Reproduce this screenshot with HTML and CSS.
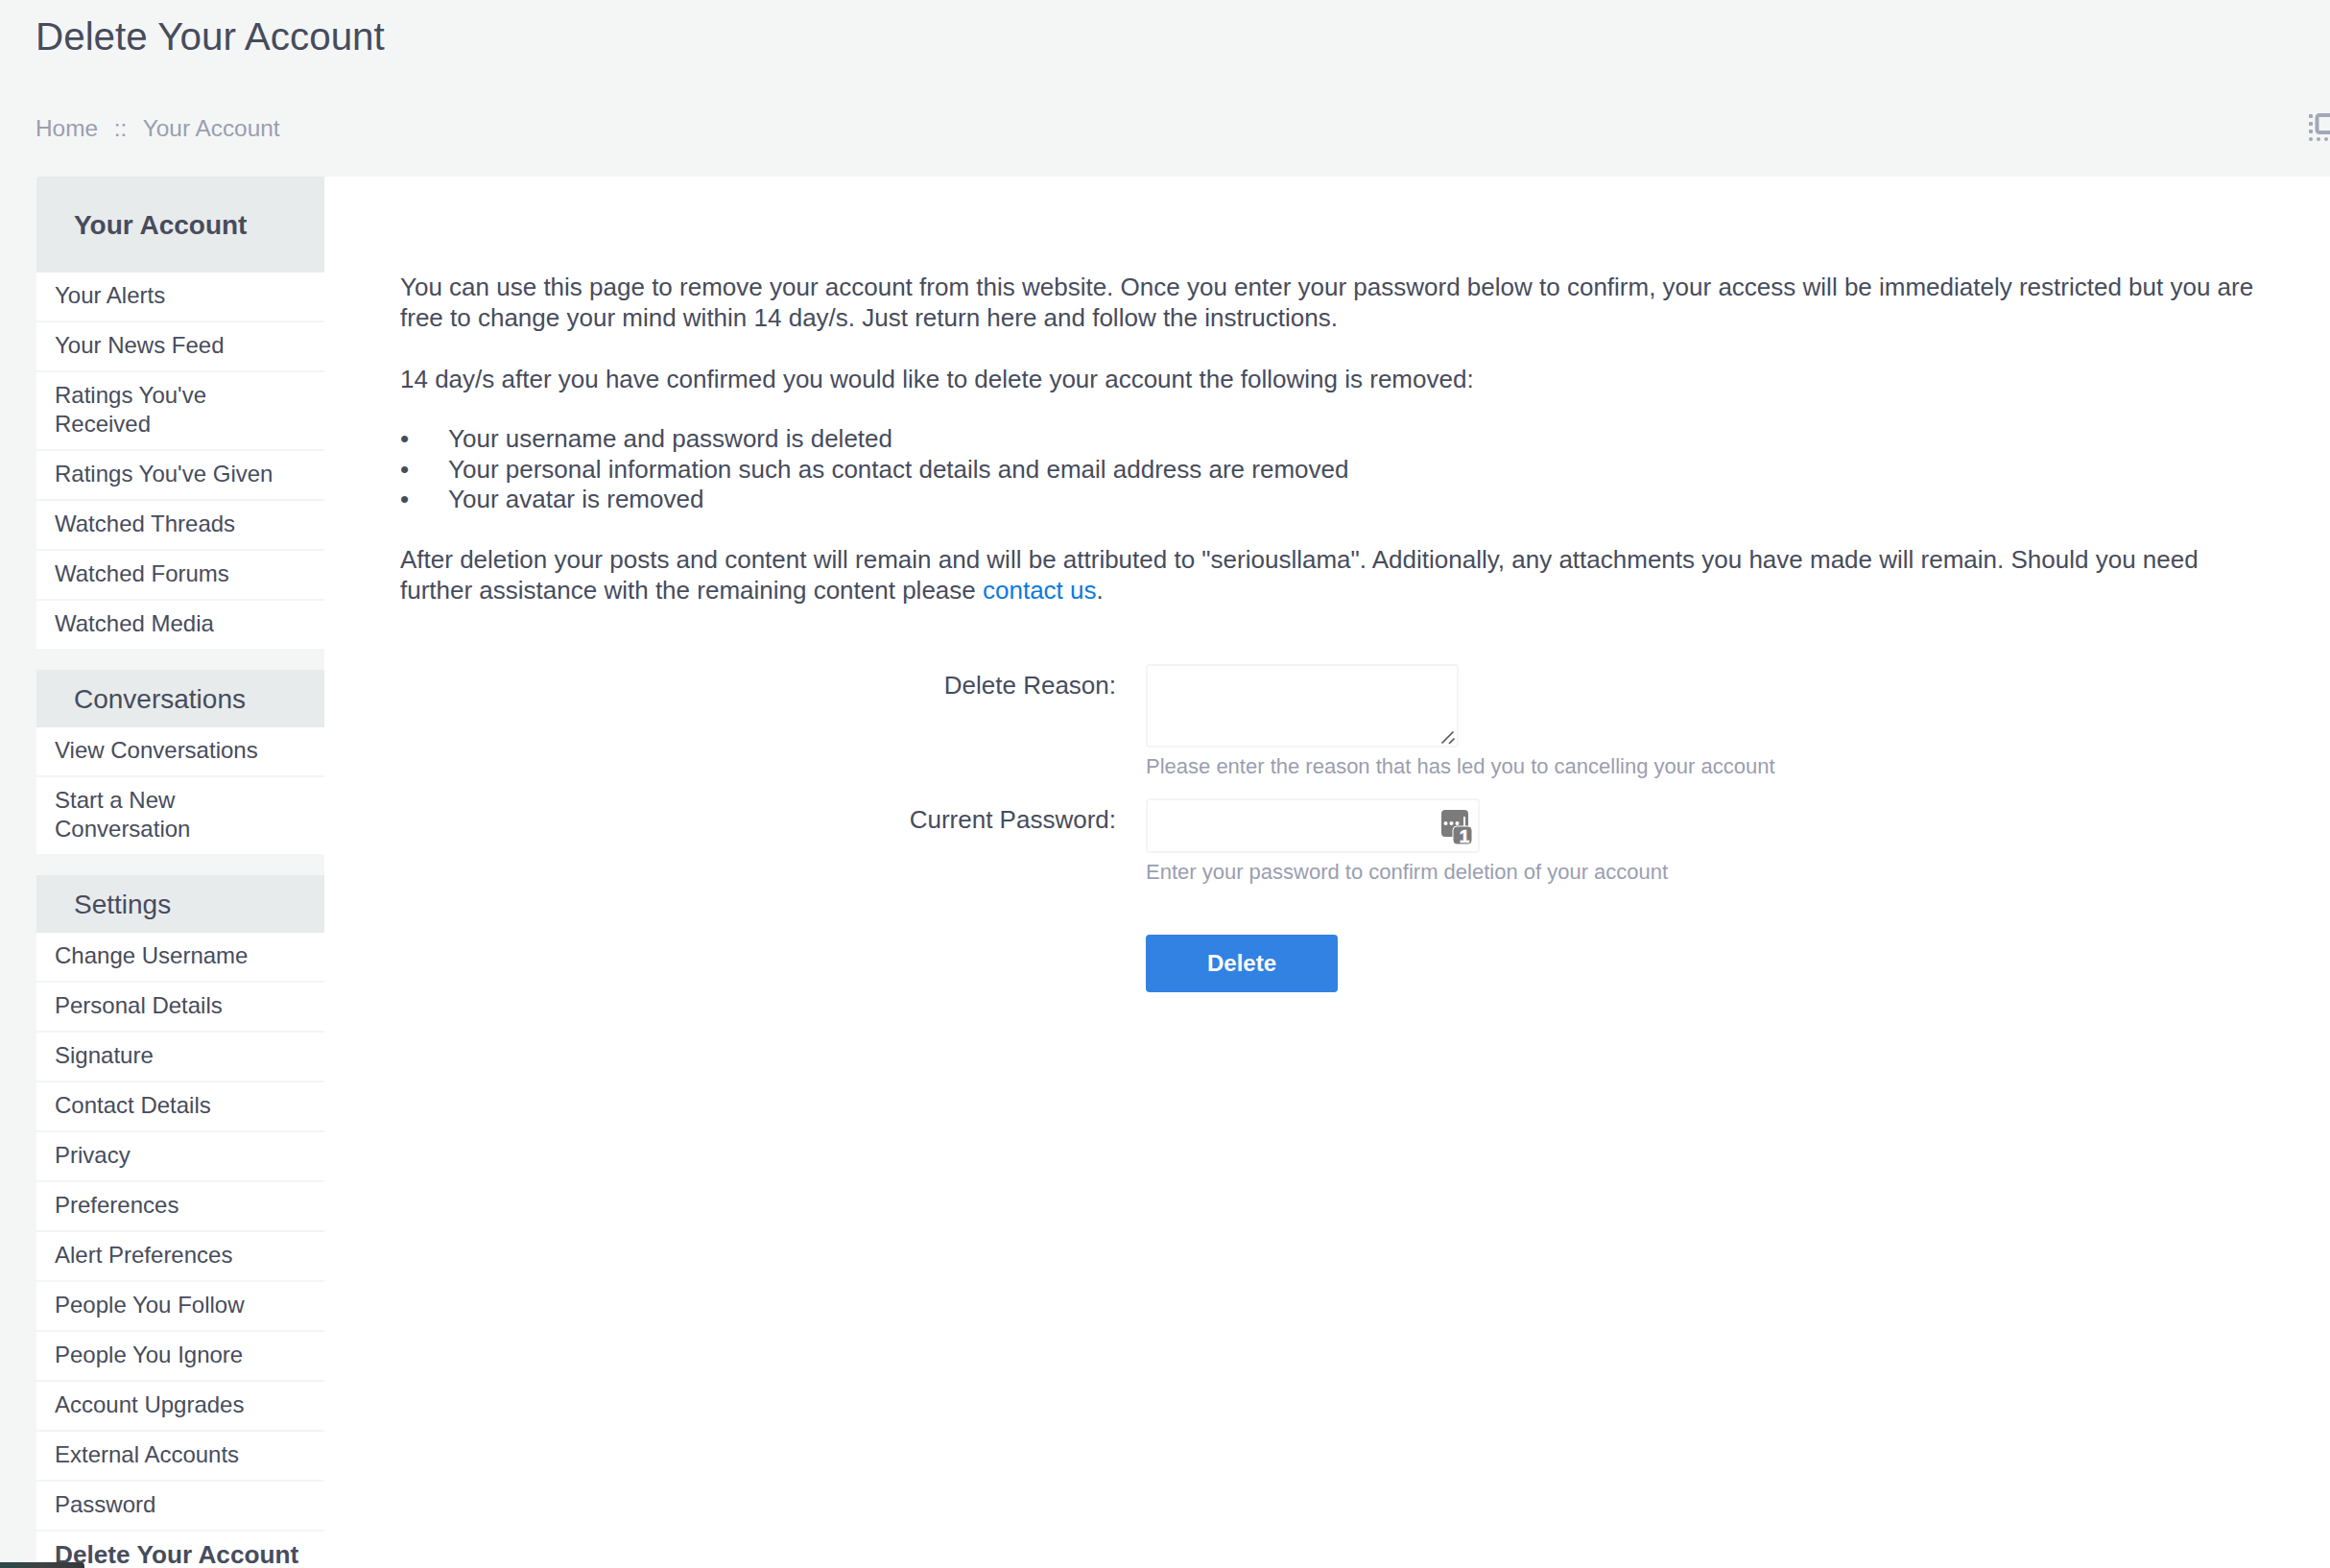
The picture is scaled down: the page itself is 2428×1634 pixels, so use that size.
FILE: index.html
```html
<!DOCTYPE html>
<html lang="en">
<head>
    <meta charset="UTF-8">
    <meta name="viewport" content="width=device-width, initial-scale=1.0">
    <title>Delete Your Account</title>
    <link rel="stylesheet" href="styles.css">
</head>
<body>
    <div class="page-head">
        <h1>Delete Your Account</h1>
        <div class="crumbs">
            <a href="#">Home</a>
            <span class="crumb-sep">::</span>
            <a href="#">Your Account</a>
        </div>
        <svg class="nav-icon" width="22" height="32" viewBox="0 0 22 32">
            <g fill="#a3a7b8">
                <rect x="0" y="1" width="4" height="4" rx="1"/>
                <rect x="0" y="9" width="4" height="4" rx="1"/>
                <rect x="0" y="17" width="4" height="4" rx="1"/>
                <rect x="0" y="25" width="4" height="4" rx="2"/>
                <rect x="8" y="25" width="4" height="4" rx="2"/>
                <rect x="16" y="25" width="4" height="4" rx="2"/>
            </g>
            <path d="M24 2h-13a2.500 2.500 0 0 0-2.500 2.500v13a2.500 2.500 0 0 0 2.500 2.500h13" fill="none" stroke="#a3a7b8" stroke-width="4"/>
        </svg>
    </div>

    <div class="layout">
        <aside class="sidebar">
            <h3 class="side-title first">Your Account</h3>
            <ul class="side-list">
                <li><a href="#">Your Alerts</a></li>
                <li><a href="#">Your News Feed</a></li>
                <li><a href="#">Ratings You've Received</a></li>
                <li><a href="#">Ratings You've Given</a></li>
                <li><a href="#">Watched Threads</a></li>
                <li><a href="#">Watched Forums</a></li>
                <li><a href="#">Watched Media</a></li>
            </ul>
            <h3 class="side-title">Conversations</h3>
            <ul class="side-list">
                <li><a href="#">View Conversations</a></li>
                <li><a href="#">Start a New Conversation</a></li>
            </ul>
            <h3 class="side-title">Settings</h3>
            <ul class="side-list">
                <li><a href="#">Change Username</a></li>
                <li><a href="#">Personal Details</a></li>
                <li><a href="#">Signature</a></li>
                <li><a href="#">Contact Details</a></li>
                <li><a href="#">Privacy</a></li>
                <li><a href="#">Preferences</a></li>
                <li><a href="#">Alert Preferences</a></li>
                <li><a href="#">People You Follow</a></li>
                <li><a href="#">People You Ignore</a></li>
                <li><a href="#">Account Upgrades</a></li>
                <li><a href="#">External Accounts</a></li>
                <li><a href="#">Password</a></li>
                <li class="current"><a href="#">Delete Your Account</a></li>
            </ul>
        </aside>

        <main class="content">
            <p>You can use this page to remove your account from this website. Once you enter your password below to confirm, your access will be immediately restricted but you are free to change your mind within 14 day/s. Just return here and follow the instructions.</p>
            <p>14 day/s after you have confirmed you would like to delete your account the following is removed:</p>
            <ul class="removed">
                <li>Your username and password is deleted</li>
                <li>Your personal information such as contact details and email address are removed</li>
                <li>Your avatar is removed</li>
            </ul>
            <p>After deletion your posts and content will remain and will be attributed to "seriousllama". Additionally, any attachments you have made will remain. Should you need further assistance with the remaining content please <a class="link" href="#">contact us</a>.</p>

            <form class="delete-form">
                <label for="reason">Delete Reason:</label>
                <div class="field">
                    <div class="reason-wrap">
                        <textarea id="reason"></textarea>
                        <svg class="grip" width="16" height="16" viewBox="0 0 16 16">
                            <path d="M1.500 14.500L13.500 2.500M9 15L14.500 9.500" fill="none" stroke="#555" stroke-width="1.600"/>
                        </svg>
                    </div>
                    <div class="hint">Please enter the reason that has led you to cancelling your account</div>
                </div>
                <label for="password">Current Password:</label>
                <div class="field">
                    <div class="pass-wrap">
                        <input type="password" id="password">
                        <svg class="pass-icon" width="32" height="36" viewBox="0 0 32 36">
                            <rect x="0" y="0" width="28" height="28" rx="4" fill="#7b7b7b"/>
                            <g fill="#fff">
                                <circle cx="4.500" cy="14" r="2"/>
                                <circle cx="10.500" cy="14" r="2"/>
                                <circle cx="16.500" cy="14" r="2"/>
                                <rect x="23" y="7" width="2" height="12"/>
                            </g>
                            <rect x="12" y="17" width="20" height="19" rx="4" fill="#7b7b7b" stroke="#fff" stroke-width="1"/>
                            <text x="24" y="33.500" class="pass-num">1</text>
                        </svg>
                    </div>
                    <div class="hint">Enter your password to confirm deletion of your account</div>
                </div>
                <div class="form-submit">
                    <button type="button">Delete</button>
                </div>
            </form>
        </main>
    </div>

    <div class="corner-bar"></div>
</body>
</html>
```

FILE: styles.css
```css
html, body {
    height: 100%;
    overflow: hidden;
}
body {
    margin: 0;
    background: #f4f6f6;
    color: #474c5c;
    font-family: "Liberation Sans", Arial, sans-serif;
    font-size: 26px;
    line-height: 32px;
}
a {
    color: inherit;
    text-decoration: none;
}
.page-head {
    position: relative;
    height: 184px;
    padding: 0 37px;
    box-sizing: border-box;
}
h1 {
    margin: 0;
    padding-top: 11px;
    font-size: 40.4px;
    line-height: 54px;
    font-weight: normal;
}
.crumbs {
    margin-top: 54px;
    font-size: 24.4px;
    line-height: 30px;
    color: #9a9eb0;
}
.crumb-sep {
    margin: 0 10px;
}
.nav-icon {
    position: absolute;
    left: 2406px;
    top: 118px;
}
.layout {
    display: flex;
    align-items: flex-start;
    margin-left: 38px;
}
.sidebar {
    width: 300px;
    flex: none;
}
.side-title {
    margin: 22px 0 0;
    height: 60px;
    padding-left: 39px;
    background: #e8ebec;
    font-size: 28px;
    line-height: 61px;
    font-weight: normal;
}
.side-title.first {
    margin-top: 0;
    height: 100px;
    line-height: 101px;
    font-weight: bold;
    border-top-left-radius: 4px;
}
.side-list {
    margin: 0;
    padding: 0;
    list-style: none;
}
.side-list li {
    background: #fff;
    padding: 9px 19px 11px;
    font-size: 24px;
    line-height: 30px;
    border-top: 2px solid #f3f4f5;
}
.side-list li:first-child {
    border-top: 0;
}
.side-list li.current {
    font-size: 26.200px;
    font-weight: bold;
}
.content {
    flex: 1;
    min-height: 1450px;
    background: #fff;
    border-top-left-radius: 4px;
    padding: 99px 79px 0;
}
.content p {
    margin: 0 0 32px;
}
.removed {
    margin: -1px 0 30px;
    padding: 0;
    list-style: none;
    line-height: 31.500px;
}
.removed li::before {
    content: "•";
    display: inline-block;
    width: 50px;
}
.link {
    color: #0a7ae0;
}
.delete-form {
    display: grid;
    grid-template-columns: 746px 1fr;
    column-gap: 31px;
    margin-top: 61px;
}
.delete-form label {
    text-align: right;
    padding-top: 6px;
}
.field {
    margin-bottom: 18px;
}
textarea, input[type="password"] {
    display: block;
    box-sizing: border-box;
    border: 2px solid #f3f4f5;
    border-radius: 4px;
    background: #fff;
    outline: none;
}
.reason-wrap {
    position: relative;
    width: 326px;
}
textarea {
    width: 100%;
    height: 87px;
    resize: none;
}
.grip {
    position: absolute;
    right: 3px;
    bottom: 3px;
}
.pass-wrap {
    position: relative;
    width: 348px;
}
input[type="password"] {
    width: 100%;
    height: 57px;
}
.pass-icon {
    position: absolute;
    right: 8px;
    top: 12px;
}
.pass-num {
    fill: #fff;
    stroke: #fff;
    stroke-width: 0.6px;
    font-size: 19px;
    font-weight: bold;
    text-anchor: middle;
}
.hint {
    margin-top: 5px;
    font-size: 22px;
    line-height: 30px;
    color: #9a9eb0;
}
.form-submit {
    grid-column: 2;
    margin-top: 32px;
}
button {
    display: block;
    width: 200px;
    height: 60px;
    padding: 0;
    border: none;
    border-radius: 4px;
    background: #3182e2;
    color: #fff;
    font-family: "Liberation Sans", Arial, sans-serif;
    font-size: 24px;
    font-weight: bold;
}
.corner-bar {
    position: absolute;
    left: 0;
    top: 1628px;
    width: 88px;
    height: 6px;
    border-top-right-radius: 4px;
    background: linear-gradient(90deg, #2c4a48, #3e4242 50%, #33383a);
}
```
